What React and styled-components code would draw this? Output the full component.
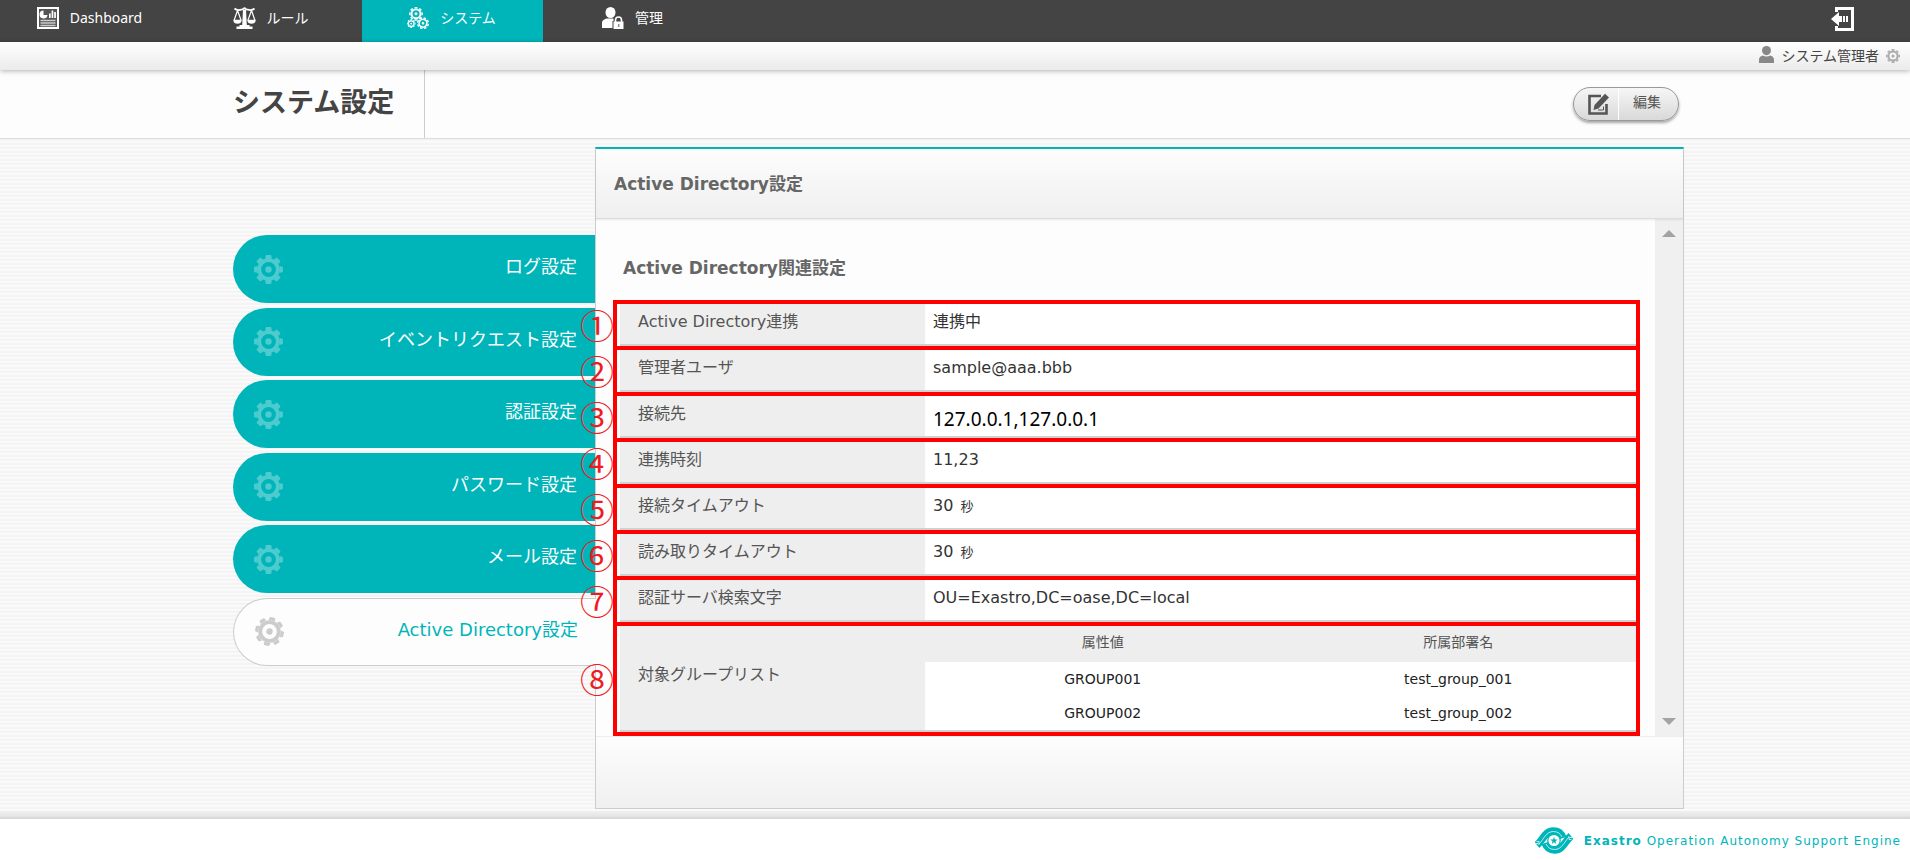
import React from 'react';
import styled, { createGlobalStyle, css } from 'styled-components';

const TEAL = '#00b5b9';
const RED = '#ff0000';

const GlobalStyle = createGlobalStyle`
  * { box-sizing: border-box; }
  body {
    margin: 0;
    background: #fff;
    color: #444;
    font-family: "DejaVu Sans", "Noto Sans CJK JP", sans-serif;
    font-size: 16px;
  }
  h1, h2, h3, p, ul { margin: 0; padding: 0; }
  ul { list-style: none; }
  a { color: inherit; text-decoration: none; }
`;

const Page = styled.div`
  display: flex;
  flex-direction: column;
  min-height: 100vh;
`;

const TopBar = styled.header`
  display: flex;
  align-items: stretch;
  justify-content: space-between;
  height: 42px;
  background: #444;
  color: #fff;
  font-family: "Noto Sans", "Noto Sans CJK JP", sans-serif;
  font-size: 14px;
`;

const Nav = styled.nav`
  display: flex;
`;

const NavLink = styled.a`
  display: flex;
  align-items: center;
  justify-content: center;
  gap: 11px;
  width: 181px;
  padding: 0 2px 7px 0;
  background: ${(p) => (p.$active ? TEAL : 'transparent')};

  span { padding-bottom: 1px; }
`;

const LogoutButton = styled.button`
  display: flex;
  align-items: center;
  padding: 0 55px 4px;
  border: 0;
  background: none;
  color: #fff;
`;

const UserBar = styled.div`
  position: relative;
  z-index: 1;
  display: flex;
  align-items: center;
  justify-content: flex-end;
  gap: 7px;
  height: 28px;
  padding: 0 10px 3px;
  background: linear-gradient(#fff, #ebebeb);
  box-shadow: 0 1px 5px rgba(0, 0, 0, 0.3);
  font-size: 14px;
`;

const UserGear = styled.span`
  display: flex;
  padding-top: 2px;
  color: #aaa;
`;

const TitleBar = styled.div`
  display: flex;
  align-items: stretch;
  justify-content: space-between;
  height: 69px;
  padding: 0 231px 0 233px;
  background: #fdfdfd;
  border-bottom: 1px solid #dcdcdc;
`;

const Title = styled.h1`
  width: 192px;
  padding-top: 13px;
  border-right: 1px solid #ccc;
  font-size: 27px;
  line-height: 40px;
`;

const EditButton = styled.button`
  display: flex;
  align-self: center;
  align-items: center;
  width: 106px;
  height: 34px;
  padding: 0;
  border: 1px solid #999;
  border-radius: 17px;
  background: linear-gradient(#f6f6f6, #d9d9d9);
  box-shadow: 0 2px 3px rgba(0, 0, 0, 0.35);
  color: #555;
  font: 14px "Noto Sans CJK JP", sans-serif;
`;

const EditIconCell = styled.span`
  display: flex;
  align-items: center;
  justify-content: flex-end;
  width: 45px;
  height: 32px;
  padding-right: 9px;
  border-right: 1px solid #fff;
`;

const EditLabel = styled.span`
  padding: 0 0 7px 14px;
`;

const Main = styled.main`
  display: flex;
  align-items: flex-start;
  padding: 8px 226px 2px 233px;
  background: repeating-linear-gradient(#f4f4f4 0 2px, #fcfcfc 2px 3px, #f8f8f8 3px 4px);
`;

const Menu = styled.ul`
  position: relative;
  z-index: 1;
  display: flex;
  flex: 0 0 362px;
  flex-direction: column;
  justify-content: space-between;
  min-height: 431px;
  margin-top: 88px;
`;

const MenuLink = styled.a`
  display: flex;
  align-items: center;
  justify-content: space-between;
  height: 68px;
  padding: 0 18px 0 21px;
  border-radius: 34px 0 0 34px;
  background: ${TEAL};
  color: #fff;
  font-size: 18px;

  svg { color: rgba(255, 255, 255, 0.3); }
  span { padding-bottom: 8px; }

  ${(p) => p.$active && css`
    margin-right: -1px;
    border: 1px solid #ccc;
    border-right: 0;
    background: #fdfdfd;
    color: ${TEAL};
    svg { color: #ccc; }
  `}
`;

const Panel = styled.section`
  flex: 1;
  min-width: 0;
  border: 1px solid #ccc;
  border-top: 2px solid ${TEAL};
  background: #fdfdfd;
`;

const PanelHeader = styled.div`
  position: relative;
  display: flex;
  align-items: center;
  height: 70px;
  padding: 0 18px;
  border-bottom: 1px solid #dcdcdc;
  background: linear-gradient(#fdfdfd, #efefef);
  box-shadow: 0 1px 2px rgba(0, 0, 0, 0.08);
`;

const Heading = styled.h2`
  color: #666;
  font-size: 17px;
  line-height: 24px;
`;

const PanelBody = styled.div`
  display: flex;
`;

const Content = styled.div`
  flex: 1;
  min-width: 0;
  padding: 37px 15px 0 17px;

  ${Heading} { padding: 0 10px 20px; }
`;

const ScrollTrack = styled.div`
  display: flex;
  flex-direction: column;
  align-items: center;
  justify-content: space-between;
  width: 28px;
  padding: 11px 0;
  background: #f0f0f0;
`;

const Arrow = styled.span`
  border: solid transparent;
  border-width: 0 7px 7px;
  border-bottom-color: #a3a3a3;
  ${(p) => p.$down && css`transform: rotate(180deg);`}
`;

const SettingsTable = styled.table`
  display: block;
  background: #fff;

  > tbody { display: block; }
`;

const SettingRow = styled.tr`
  position: relative;
  display: grid;
  grid-template-columns: 308px 1fr;
  min-height: 50px;
  border: 4px solid ${RED};
  & + & { margin-top: -4px; }
`;

const Label = styled.th`
  display: flex;
  align-items: ${(p) => (p.$middle ? 'center' : 'flex-start')};
  margin-left: 3px;
  padding: ${(p) => (p.$middle ? '0 18px 6px' : '0 18px')};
  border-bottom: 2px solid #d0d0d0;
  background: #eee;
  color: #555;
  font-weight: normal;
  line-height: 36px;
`;

const Value = styled.td`
  padding: ${(p) => (p.$table ? '0' : '0 8px')};
  border-bottom: 2px solid #d0d0d0;
  color: #333;
  line-height: 36px;

  small { margin-left: 2px; font-size: 13px; }
`;

const TypedValue = styled.span`
  display: block;
  padding-top: 6px;
  color: #000;
  font: 19px/34px "Noto Sans", sans-serif;
`;

const Marker = styled.span`
  position: absolute;
  z-index: 2;
  top: 50%;
  left: -37px;
  width: 34px;
  color: #ed1c24;
  font: 34px/34px "Noto Sans CJK JP", sans-serif;
  transform: translateY(-50%);
`;

const GroupTable = styled.table`
  width: 100%;
  table-layout: fixed;
  border-collapse: collapse;
  color: #222;
  font-size: 14px;

  th { height: 36px; padding: 0 0 4px; background: #eee; color: #555; font-weight: normal; line-height: 32px; }
  td { height: 34px; padding: 0; text-align: center; line-height: 34px; }
`;

const PanelFooter = styled.div`
  height: 72px;
  border-top: 1px solid #eee;
  background: linear-gradient(#fdfdfd, #f0f0f0);
`;

const FooterShade = styled.div`
  height: 8px;
  background: linear-gradient(#f0f0f0, #e6e6e6 60%, #d4d4d4);
`;

const Footer = styled.footer`
  display: flex;
  flex: 1;
  align-items: center;
  justify-content: flex-end;
  gap: 11px;
  min-height: 40px;
  padding: 2px 9px 0 0;
  background: #fff;
  color: ${TEAL};
  font-size: 12px;
  letter-spacing: 1px;
`;

const toothAngles = [0, 45, 90, 135, 180, 225, 270, 315];

const GearShape = ({ x = 0, y = 0, s = 1, turn = 0 }) => (
  <g transform={`translate(${x} ${y}) scale(${s}) rotate(${turn})`}>
    <circle r="9.3" fill="none" stroke="currentColor" strokeWidth="3.8" />
    {toothAngles.map((a) => (
      <path key={a} d="M-3.4-11.1 L-2.6-14.4 H2.6 L3.4-11.1Z" fill="currentColor" transform={`rotate(${a})`} />
    ))}
    <circle r="3.2" fill="currentColor" />
  </g>
);

const GearIcon = ({ size, turn }) => (
  <svg width={size} height={size} viewBox="-14.5 -14.5 29 29" aria-hidden="true">
    <GearShape turn={turn} />
  </svg>
);

const ReportIcon = () => (
  <svg width="22" height="22" viewBox="0 0 22 22" aria-hidden="true">
    <path d="M1 1h20v20H1z" fill="#555" stroke="#fff" strokeWidth="2" />
    <path d="M6.500 3.500v4.500h4a4 4 0 1 1-4-4.500zM12 6.500h1.700V11H12zM14.600 3.500h1.700V11h-1.700zM17.200 5h1.700v6h-1.700z" fill="#fff" />
    <path d="M3.500 13.500h15M3.500 16h15M3.500 18.500h15" stroke="#ccc" strokeWidth="1.5" />
  </svg>
);

const ScalesIcon = () => (
  <svg width="23" height="22" viewBox="0 0 23 22" aria-hidden="true" fill="none" stroke="#fff">
    <path d="M1.5 1.5C4 4 7 3 9 2.6c1-.3 1.600-1.400 2.500-1.400s1.500 1.100 2.500 1.400c2 .4 5 1.400 7.500-1.100" strokeWidth="1.8" />
    <path d="M4.500 3.500 1.200 13M4.500 3.500 8 13M18.500 3.500 15 13M18.500 3.500 21.800 13" strokeWidth="1.200" />
    <path d="M10 2.500h3l.8 15.500H9.200z" fill="#fff" stroke="none" />
    <path d="M.2 12.800h8.600c-.3 3-2 4-4.300 4s-4-1-4.300-4zM14.200 12.800h8.600c-.3 3-2 4-4.300 4s-4-1-4.300-4zM6.500 18h10v1.500h3V22h-16v-2.500h3z" fill="#fff" stroke="none" />
  </svg>
);

const GearsIcon = () => (
  <svg width="22" height="22" viewBox="0 0 22 22" aria-hidden="true">
    <GearShape x={9} y={6.8} s={0.48} />
    <GearShape x={4.2} y={16.6} s={0.3} />
    <GearShape x={16} y={16.2} s={0.42} turn={20} />
  </svg>
);

const AdminIcon = () => (
  <svg width="22" height="22" viewBox="0 0 22 22" aria-hidden="true">
    <ellipse cx="8.500" cy="5.500" rx="5" ry="5.500" fill="#fff" />
    <path d="M0 21v-5c0-3 3-4.500 6-4.500h5c3 0 5 1 6 3v6.500z" fill="#fff" />
    <path d="M10.500 22v-8h1v-3h9v3h1.500v8z" fill="#444" />
    <path d="M11.500 14.500h10V22h-10z" fill="#fff" />
    <path d="M13.500 15v-2a3 3 0 0 1 6 0v2" fill="none" stroke="#fff" strokeWidth="1.600" />
    <path d="M16 17h1.400v3H16z" fill="#888" />
  </svg>
);

const LogoutIcon = () => (
  <svg width="24" height="24" viewBox="0 0 24 24" aria-hidden="true">
    <path d="M5.500 5V1.500h16v21h-16V19" fill="none" stroke="#fff" strokeWidth="3" />
    <path d="M0 12l8-7v4h3v6H8v4zM12 9h2v6h-2zM15 9h2v6h-2z" fill="#fff" />
  </svg>
);

const UserIcon = () => (
  <svg width="15" height="17" viewBox="0 0 15 17" aria-hidden="true" fill="#888">
    <ellipse cx="7.500" cy="4.600" rx="4.500" ry="4.600" />
    <path d="M0 17v-3.500C0 11 2 10 4 9.500c2 1.400 5 1.400 7 0 2 .5 4 1.500 4 4V17z" />
  </svg>
);

const EditIcon = () => (
  <svg width="21" height="22" viewBox="0 0 21 22" aria-hidden="true">
    <path d="M13 3H1.500v17.500h17V11" fill="none" stroke="#555" strokeWidth="2.600" />
    <path d="M5.500 17 6.500 12 17 .8 21 4.500 10.500 15.500z" fill="#555" />
    <path d="M10 17h5.500v-3.500" fill="none" stroke="#555" />
  </svg>
);

const Swoosh = () => (
  <>
    <path d="M2 18C8 13 10 4 18.500 4c5 0 8 3 9.500 7" fill="none" stroke={TEAL} strokeWidth="7.500" />
    <path d="M4 17C9 12 11 4.500 18.500 4.500c4.500 0 7 2.500 8.500 5.500" fill="none" stroke="#fff" strokeWidth=".7" />
    <path d="M1.500 14.500h2.500v3.500M.5 16.500h3" fill="none" stroke="#fff" strokeWidth=".7" />
  </>
);

const ExastroLogo = () => (
  <svg width="38" height="27" viewBox="0 0 38 27" aria-hidden="true">
    <Swoosh />
    <g transform="rotate(180 19 13.500)"><Swoosh /></g>
    <circle cx="19" cy="13.500" r="6.200" fill="#fff" stroke={TEAL} strokeWidth="1.200" />
    <path d="M19 9.800l.9 2.700h2.800l-2.200 1.700.8 2.700-2.300-1.600-2.300 1.600.8-2.700-2.200-1.700h2.800z" fill={TEAL} />
  </svg>
);

const navItems = [
  { label: 'Dashboard', Icon: ReportIcon },
  { label: 'ルール', Icon: ScalesIcon },
  { label: 'システム', Icon: GearsIcon, active: true },
  { label: '管理', Icon: AdminIcon },
];

const menuItems = [
  'ログ設定',
  'イベントリクエスト設定',
  '認証設定',
  'パスワード設定',
  'メール設定',
  'Active Directory設定',
];

const settings = [
  ['①', 'Active Directory連携', '連携中'],
  ['②', '管理者ユーザ', 'sample@aaa.bbb'],
  ['③', '接続先', <TypedValue>127.0.0.1,127.0.0.1</TypedValue>],
  ['④', '連携時刻', '11,23'],
  ['⑤', '接続タイムアウト', <>30 <small>秒</small></>],
  ['⑥', '読み取りタイムアウト', <>30 <small>秒</small></>],
  ['⑦', '認証サーバ検索文字', 'OU=Exastro,DC=oase,DC=local'],
];

const groups = [
  ['GROUP001', 'test_group_001'],
  ['GROUP002', 'test_group_002'],
];

export default function App() {
  return (
    <Page>
      <GlobalStyle />
      <TopBar>
        <Nav>
          {navItems.map(({ label, Icon, active }) => (
            <NavLink key={label} href="#" $active={active}>
              <Icon />
              <span>{label}</span>
            </NavLink>
          ))}
        </Nav>
        <LogoutButton type="button" aria-label="ログアウト"><LogoutIcon /></LogoutButton>
      </TopBar>
      <UserBar>
        <UserIcon />
        <span>システム管理者</span>
        <UserGear><GearIcon size={14} /></UserGear>
      </UserBar>
      <TitleBar>
        <Title>システム設定</Title>
        <EditButton type="button">
          <EditIconCell><EditIcon /></EditIconCell>
          <EditLabel>編集</EditLabel>
        </EditButton>
      </TitleBar>
      <Main>
        <Menu>
          {menuItems.map((item, i) => {
            const active = i === menuItems.length - 1;
            return (
              <li key={item}>
                <MenuLink href="#" $active={active}>
                  <GearIcon size={29} turn={active ? 12 : 0} />
                  <span>{item}</span>
                </MenuLink>
              </li>
            );
          })}
        </Menu>
        <Panel>
          <PanelHeader><Heading>Active Directory設定</Heading></PanelHeader>
          <PanelBody>
            <Content>
              <Heading as="h3">Active Directory関連設定</Heading>
              <SettingsTable>
                <tbody>
                  {settings.map(([mark, label, value]) => (
                    <SettingRow key={mark}>
                      <Label scope="row">{label}</Label>
                      <Value>{value}<Marker>{mark}</Marker></Value>
                    </SettingRow>
                  ))}
                  <SettingRow>
                    <Label scope="row" $middle>対象グループリスト</Label>
                    <Value $table>
                      <GroupTable>
                        <thead>
                          <tr><th scope="col">属性値</th><th scope="col">所属部署名</th></tr>
                        </thead>
                        <tbody>
                          {groups.map(([attr, dept]) => (
                            <tr key={attr}><td>{attr}</td><td>{dept}</td></tr>
                          ))}
                        </tbody>
                      </GroupTable>
                      <Marker>⑧</Marker>
                    </Value>
                  </SettingRow>
                </tbody>
              </SettingsTable>
            </Content>
            <ScrollTrack>
              <Arrow />
              <Arrow $down />
            </ScrollTrack>
          </PanelBody>
          <PanelFooter />
        </Panel>
      </Main>
      <FooterShade />
      <Footer>
        <ExastroLogo />
        <p><strong>Exastro</strong> Operation Autonomy Support Engine</p>
      </Footer>
    </Page>
  );
}
